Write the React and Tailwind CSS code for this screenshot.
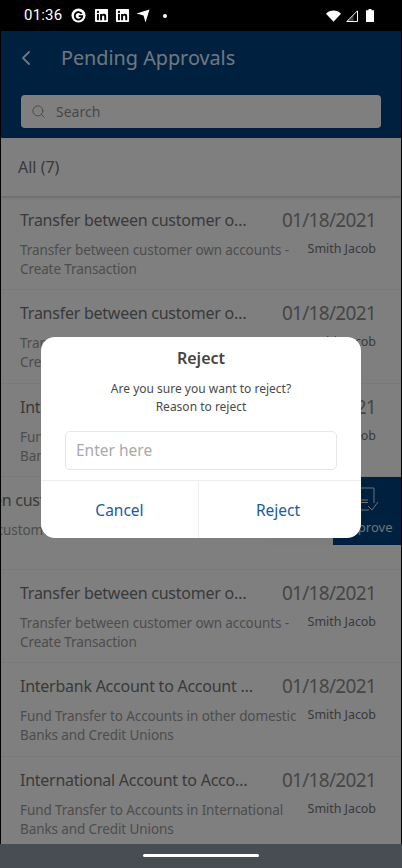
import React from "react";
import { ChevronLeft, Search } from "lucide-react";
import { FaLinkedin } from "react-icons/fa";

const font = { fontFamily: '"Noto Sans", sans-serif' };

const rows = [
  { title: "Transfer between customer o…", sub: ["Transfer between customer own accounts -", "Create Transaction"] },
  { title: "Transfer between customer o…", sub: ["Transfer between customer own accounts -", "Create Transaction"] },
  { title: "Interbank Account to Account …", sub: ["Fund Transfer to Accounts in other domestic", "Banks and Credit Unions"] },
  { title: "Transfer between customer o…", sub: ["Transfer between customer own accounts -", "Create Transaction"], swiped: true },
  { title: "Transfer between customer o…", sub: ["Transfer between customer own accounts -", "Create Transaction"] },
  { title: "Interbank Account to Account …", sub: ["Fund Transfer to Accounts in other domestic", "Banks and Credit Unions"] },
  { title: "International Account to Acco…", sub: ["Fund Transfer to Accounts in International", "Banks and Credit Unions"] },
];

const StatusBar = () => (
  <div className="relative z-20 h-[31px] flex items-center justify-between bg-black pl-[24px] pr-[28px] text-white">
    <div className="flex items-center">
      <span className="text-[15px] leading-none tracking-[0.2px] font-['Roboto',sans-serif]">01:36</span>
      <svg viewBox="0 0 16 16" className="ml-[9px] w-[15px] h-[15px]">
        <circle cx="8" cy="8" r="7.5" fill="#fff" />
        <path d="M11.4 6.2A4 4 0 1 0 12 8.600H8.200" fill="none" stroke="#000" strokeWidth="2" />
      </svg>
      <FaLinkedin className="ml-[8px] w-[15px] h-[15px]" />
      <FaLinkedin className="ml-[6px] w-[15px] h-[15px]" />
      <svg viewBox="0 0 14 14" className="ml-[6px] w-[14px] h-[14px]">
        <path d="M0.5 4.5 13.5 0.5 9.5 13.5 7.5 6.5Z" fill="#fff" />
      </svg>
      <span className="ml-[13px] w-[4px] h-[4px] rounded-full bg-white" />
    </div>
    <div className="flex items-center">
      <svg viewBox="0 0 16 12" className="w-[15px] h-[12px]">
        <path d="M0 3.600C4.200-.9 11.800-.9 16 3.600L8 12Z" fill="#fff" />
      </svg>
      <svg viewBox="0 0 12 12" className="ml-[5px] w-[12px] h-[12px]">
        <path d="M11.5.8V11.5H.8Z" fill="none" stroke="#fff" strokeWidth="1" />
        <path d="M7.5 5V11.5H1Z" fill="#fff" opacity="0.25" />
      </svg>
      <svg viewBox="0 0 8 13" className="ml-[8px] w-[8px] h-[13px]">
        <path d="M2.5 0h3v1.300H8V13H0V1.300h2.500Z" fill="#fff" />
      </svg>
    </div>
  </div>
);

const Row = ({ title, sub, swiped }) => (
  <div className="relative h-[93.25px] border-b border-[#f2f2f2] overflow-hidden">
    <div className={`pl-[19px] pr-[25px] pt-[12px] ${swiped ? "-translate-x-[136px]" : ""}`}>
      <div className="flex items-center justify-between h-[23px]">
        <span className="text-[#747474] text-[16px] tracking-[-0.25px] leading-[23px] whitespace-nowrap">{title}</span>
        <span className="text-[#8c8c8c] text-[19px] tracking-[-0.7px] leading-[23px] whitespace-nowrap">01/18/2021</span>
      </div>
      <div className="relative mt-[9px] text-[#9a9a9a] text-[13.5px] tracking-[-0.1px] leading-[19px]">
        <div className="whitespace-nowrap">{sub[0]}</div>
        <div className="whitespace-nowrap">{sub[1]}</div>
        <span className="absolute right-0 top-[-1px] bg-white pl-[5px] text-[#747474] text-[12.5px] tracking-[-0.05px] leading-[18px] whitespace-nowrap">Smith Jacob</span>
      </div>
    </div>
    {swiped && (
      <div className="absolute right-0 top-0 h-[68px] flex">
        <div className="w-[68px] bg-[#fbfbfb]" />
        <div className="w-[68px] bg-[#004080] flex flex-col items-center pt-[10px] text-[#d8e4f0]">
          <svg viewBox="0 0 24 24" className="w-[24px] h-[24px]" fill="none" stroke="currentColor" strokeWidth="1">
            <path d="M3 1h16v15" />
            <path d="M3 1v10M3 13h10M3 15.500h10M1 18v5h13M13 19l4 4 6-8" />
          </svg>
          <span className="mt-[7px] text-[13px] leading-[18px]">Approve</span>
        </div>
      </div>
    )}
  </div>
);

const RejectDialog = () => (
  <div className="absolute z-10 left-[41px] top-[337px] w-[320px] h-[201px] bg-white rounded-[14px] flex flex-col items-center overflow-hidden">
    <h2 className="mt-[9px] text-[#444] text-[16px] font-semibold leading-[24px]">Reject</h2>
    <p className="mt-[10px] text-[#4a4a4a] text-[12px] leading-[18px] text-center">
      Are you sure you want to reject?
      <br />
      Reason to reject
    </p>
    <div className="mt-[15px] w-[272px] h-[39px] border border-[#e6e6e6] rounded-[5px] flex items-center px-[10px] text-[#aaaaaa] text-[15.5px]">
      Enter here
    </div>
    <div className="mt-[10px] w-full flex-1 flex border-t border-[#eeeeee] text-[#1a5ba0] text-[15.5px]">
      <div className="w-[158px] pt-[2px] border-r border-[#eeeeee] flex items-center justify-center">Cancel</div>
      <div className="flex-1 pt-[2px] pr-[4px] flex items-center justify-center">Reject</div>
    </div>
  </div>
);

export default function App() {
  return (
    <div className="relative w-[402px] h-[868px] overflow-hidden bg-black" style={font}>
      <StatusBar />
      <div className="mx-px h-[813px] bg-white overflow-hidden">
        <header className="h-[107px] bg-[#004080] text-[#dfeeff]">
          <div className="h-[54px] flex items-center">
            <ChevronLeft className="ml-[13px] w-[24px] h-[24px]" strokeWidth={1.8} />
            <h1 className="ml-[23px] text-[19.8px] leading-none">Pending Approvals</h1>
          </div>
          <div className="mx-[20px] mt-[10px] h-[33px] rounded-[4px] bg-white flex items-center px-[10px] text-[#8f8f8f]">
            <Search className="w-[15px] h-[15px]" strokeWidth={1.5} />
            <span className="ml-[10px] text-[14px]">Search</span>
          </div>
        </header>
        <div className="h-[59px] flex items-center pl-[17px] border-b border-[#dcdcdc] shadow-sm text-[#747474] text-[16px]">All (7)</div>
        {rows.map((r, i) => (
          <Row key={i} {...r} />
        ))}
      </div>
      <div className="absolute inset-0 bg-black/50" />
      <RejectDialog />
      <div className="absolute z-20 bottom-0 inset-x-0 h-[24px] bg-[#474d52] flex justify-center">
        <div className="mt-[10px] w-[116px] h-[3px] rounded-full bg-white" />
      </div>
    </div>
  );
}
